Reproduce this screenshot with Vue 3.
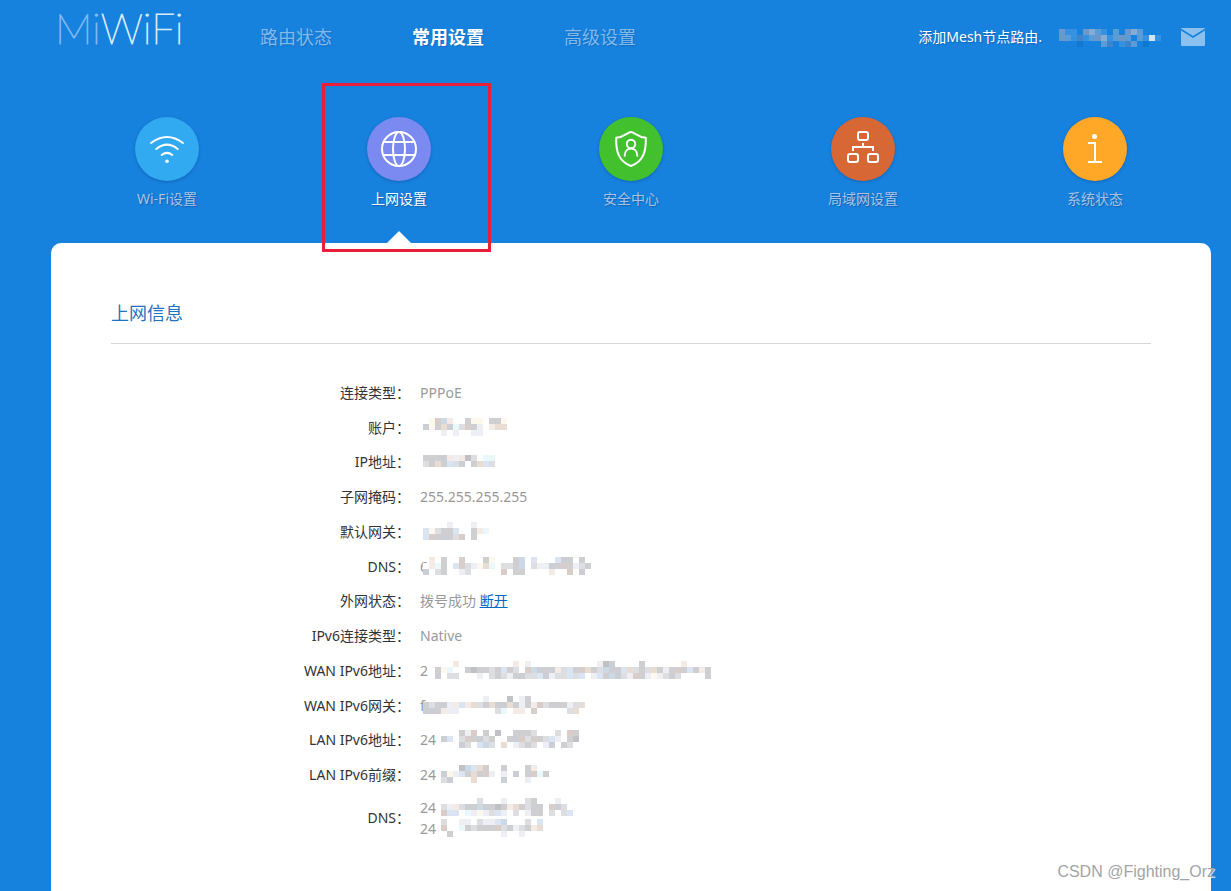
<script setup>
const tabs = [
  { label: '路由状态', active: false },
  { label: '常用设置', active: true },
  { label: '高级设置', active: false },
]

const sections = [
  { id: 'wifi', label: 'Wi-Fi设置' },
  { id: 'net', label: '上网设置', active: true },
  { id: 'safe', label: '安全中心' },
  { id: 'lan', label: '局域网设置' },
  { id: 'info', label: '系统状态' },
]

const palette = {
  W: '#ffffff', a: '#fdf8ee', r: '#f4ebe7', p: '#d8cdc9', q: '#e9ddd3',
  g: '#cfcfd1', d: '#c0c1c5', l: '#dddee1', b: '#dbe4f2', B: '#cbd8e6',
  c: '#e9f8fa', s: '#cbced5', v: '#eeeff4',
  1: '#3592e0', 2: '#5a9cd6', 3: '#6d97c9', 4: '#3f84c8', 5: '#86abd4', 6: '#cfe4f8', 7: '#0f78d2',
}

// Masked values are drawn as 6px cells, one letter of the palette per cell.
function cells(rows) {
  return rows.flatMap((row, y) =>
    [...row].map((k, x) => ({ x: x * 6, y: y * 6, fill: palette[k] })).filter((c) => c.fill),
  )
}

const userMask = cells(['311.3521.2.352...', '321412351232.2161', '...7...24.142.7..'])

const rows = [
  { label: '连接类型：', lines: [{ text: 'PPPoE' }] },
  { label: '账户：', lines: [{ mask: cells(['.apBr..gaa.gga', 'sagqsclpgv.rqq', '...v.v..vv....']) }] },
  { label: 'IP地址：', lines: [{ mask: cells(['gggsrvrdl.cc', 'lgqgblsWgqbl']), low: true }] },
  { label: '子网掩码：', lines: [{ text: '255.255.255.255' }] },
  { label: '默认网关：', lines: [{ mask: cells(['....v...v..', 'balggb..grc', 'bpgsglp.g..']) }] },
  {
    label: 'DNS：',
    lines: [{ text: '6', mask: cells(['.r.g..p...ga...gB.b...bsg.g.', 'Wrcg.bplvaqc.llgB.lvvsgpgvlg', 's.lg..vl.....p.gg....r..p.s.']) }],
  },
  { label: '外网状态：', lines: [{ text: '拨号成功', link: '断开' }] },
  { label: 'IPv6连接类型：', lines: [{ text: 'Native' }] },
  {
    label: 'WAN IPv6地址：',
    lines: [{
      text: '2',
      mask: cells([
        '.....r.........r.v...........vds....g......r....',
        '..gac..sdgglgbglWpBsgsrlbgpqglBsgbqlglqgvgpgbgrg',
        '..s.ll...v.lglvgsllbsvllblb.vbgBslvpgvavlgl....g',
      ]),
    }],
  },
  {
    label: 'WAN IPv6网关：',
    lines: [{ text: 'f', mask: cells(['..........v...d.vg.........', 'glgsvrbrqlsqgsqgvgrplgggvlq', 'ssgrvv......lc.rr.p.....lq.']) }],
  },
  {
    label: 'LAN IPv6地址：',
    lines: [{ text: '24', mask: cells(['......gvp.g.d..gggl...l.pg', '...sb.lpgslg..gsplpglbv.gd', '......sl.bBl.q.vlgl.vs.gl.']) }],
  },
  {
    label: 'LAN IPv6前缀：',
    lines: [{ text: '24', mask: cells(['......dBbqg..g...gr..', '...savbgqgpv.v.s.gpcg', '...ls...q....s...v...']) }],
  },
  {
    label: 'DNS：',
    tall: true,
    lines: [
      { text: '24', mask: cells(['.........l...v...lg...v..', '...lvrlsgBsgdgrqglgs.psl.', '...pbb.cvavlbv.l.vgg.l.lb']) },
      { text: '24', mask: cells(['...l..vv.lvvbB...l.b.', '...p..cglgggplsvlgrq.', '....g........v..v....']) },
    ],
  },
]
</script>

<template>
  <div class="page">
    <header class="top">
      <a class="logo" href="#"><span class="soft">Mi</span>WiFi</a>
      <nav class="tabs">
        <a v-for="t in tabs" :key="t.label" href="#" class="tab" :class="{ active: t.active }">{{ t.label }}</a>
      </nav>
      <div class="account">
        <a class="mesh" href="#">添加Mesh节点路由.</a>
        <svg class="user" width="102" height="18" viewBox="0 0 102 18" shape-rendering="crispEdges" aria-hidden="true">
          <rect v-for="(c, i) in userMask" :key="i" :x="c.x" :y="c.y" width="6" height="6" :fill="c.fill" />
        </svg>
        <button class="mail" type="button" aria-label="消息">
          <svg width="24" height="18" viewBox="0 0 24 18">
            <rect width="24" height="18" rx="1" fill="#8cc0ef" />
            <path d="M0 1.5L12 9L24 1.5" fill="none" stroke="#1781de" stroke-width="1.6" />
          </svg>
        </button>
      </div>
    </header>

    <nav class="sections">
      <a v-for="s in sections" :key="s.id" href="#" class="section" :class="{ active: s.active }">
        <span class="disc" :class="s.id">
          <svg width="64" height="64" viewBox="0 0 64 64" fill="none" stroke="#fff" stroke-width="2">
            <g v-if="s.id === 'wifi'" stroke-linecap="round">
              <path d="M16 26Q32 14 48 26M21.300 32Q32 23.200 42.700 32M26.700 38Q32 33.800 37.300 38" />
              <circle cx="32" cy="44.300" r="1.800" fill="#fff" stroke="none" />
            </g>
            <g v-else-if="s.id === 'net'">
              <circle cx="32" cy="32" r="17" />
              <ellipse cx="32" cy="32" rx="6" ry="17" />
              <path d="M16.500 25H47.500M16.500 38H47.500" />
            </g>
            <g v-else-if="s.id === 'safe'" stroke-linejoin="round">
              <path d="M32 15C28.500 15 26 20 17.200 20.700C16.800 34 19.500 44.500 32 49C44.500 44.500 47.200 34 46.800 20.700C38 20 35.500 15 32 15Z" />
              <circle cx="32" cy="27" r="4.200" />
              <path d="M25.700 38.700C25.700 29.200 38.300 29.200 38.300 38.700" stroke-linecap="round" />
            </g>
            <g v-else-if="s.id === 'lan'">
              <rect x="27" y="15" width="10" height="8" rx="2" />
              <rect x="17" y="37" width="10" height="8" rx="2" />
              <rect x="37" y="37" width="10" height="8" rx="2" />
              <path d="M32 26V30M22 34V30H42V34" />
            </g>
            <g v-else>
              <circle cx="31.500" cy="19.500" r="2.500" fill="#fff" stroke="none" />
              <path d="M25 26H32V45M25 45H39" />
            </g>
          </svg>
        </span>
        <span class="name">{{ s.label }}</span>
        <span v-if="s.active" class="arrow"></span>
        <span v-if="s.active" class="marker"></span>
      </a>
    </nav>

    <main class="panel">
      <h2 class="title">上网信息</h2>
      <table class="details">
        <tbody>
          <tr v-for="(r, i) in rows" :key="i" :class="{ tall: r.tall }">
            <th scope="row">{{ r.label }}</th>
            <td>
              <div v-for="(l, j) in r.lines" :key="j" class="line">
                {{ l.text }}
                <a v-if="l.link" href="#" class="link">{{ l.link }}</a>
                <svg v-if="l.mask" class="mask" :class="{ low: l.low }" width="300" height="18" viewBox="0 0 300 18" shape-rendering="crispEdges" aria-hidden="true">
                  <rect v-for="(c, k) in l.mask" :key="k" :x="c.x" :y="c.y" width="6" height="6" :fill="c.fill" />
                </svg>
              </div>
            </td>
          </tr>
        </tbody>
      </table>
    </main>
    <div class="watermark">CSDN @Fighting_Orz</div>
  </div>
</template>

<style>
body {
  background: #1781de;
}
</style>

<style scoped>
.page {
  position: relative;
  box-sizing: border-box;
  min-height: 100vh;
  padding: 0 20px 0 51px;
  display: flex;
  flex-direction: column;
  overflow: hidden;
  background: #1781de;
  font-family: "Noto Sans", "Noto Sans CJK SC", sans-serif;
  font-size: 14px;
}
a {
  text-decoration: none;
}
.top {
  display: flex;
  height: 73px;
}
.logo {
  width: 209px;
  box-sizing: border-box;
  padding-left: 4px;
  font-family: Lato, sans-serif;
  font-weight: 100;
  font-size: 42px;
  line-height: 56px;
  color: #e6f2fd;
  -webkit-text-stroke: 1px #d6eafb;
}
.soft {
  color: #8cc3f3;
  -webkit-text-stroke: 1px #7ebaf0;
}
.tabs {
  display: flex;
  gap: 80px;
}
.tab {
  font-size: 18px;
  line-height: 74px;
  color: #82b9ec;
  text-shadow: 1px 1px 1px rgba(0, 40, 90, 0.2);
}
.tab.active {
  color: #fff;
  font-weight: 700;
}
.account {
  display: flex;
  align-items: center;
  margin-left: auto;
  padding-right: 6px;
}
.mesh {
  padding-bottom: 2px;
  color: #fff;
  text-shadow: 1px 1px 1px rgba(0, 40, 90, 0.3);
}
.user {
  margin: 3px 20px 0 17px;
}
.mail {
  display: flex;
  padding: 0;
  border: 0;
  background: none;
}
.sections {
  display: grid;
  grid-template-columns: repeat(5, 1fr);
  height: 170px;
}
.section {
  position: relative;
  display: flex;
  flex-direction: column;
  align-items: center;
  padding-top: 44px;
  color: #a8c3e6;
  text-shadow: 1px 1px 1px rgba(0, 40, 90, 0.35);
}
.section.active {
  color: #fff;
}
.disc {
  width: 64px;
  height: 64px;
  border-radius: 50%;
  box-shadow: 0 1px 3px rgba(0, 40, 90, 0.3);
}
.disc svg {
  display: block;
}
.wifi { background: #31aaf1; }
.net { background: #7b8af1; }
.safe { background: #42c02e; }
.lan { background: #d76735; }
.info { background: #ffa726; }
.name {
  margin-top: 8px;
  line-height: 20px;
}
.arrow {
  position: absolute;
  bottom: 0;
  border: 12px solid transparent;
  border-top: 0;
  border-bottom-color: #fff;
}
.marker {
  position: absolute;
  z-index: 1;
  left: 39px;
  top: 10px;
  width: 163px;
  height: 163px;
  border: 3px solid #e81f38;
}
.panel {
  flex: 1;
  padding: 50px 60px 47px;
  border-radius: 10px 10px 0 0;
  background: #fff;
}
.title {
  margin: 0;
  padding-bottom: 10px;
  border-bottom: 1px solid #d6d6d6;
  font-size: 18px;
  font-weight: 400;
  line-height: 40px;
  color: #1f73bf;
}
.details {
  width: 100%;
  height: 468px;
  margin-top: 31px;
  border-collapse: collapse;
}
th,
td {
  padding: 0;
  font-weight: 400;
  line-height: 21px;
  vertical-align: middle;
}
th {
  width: 299px;
  text-align: right;
  color: #333;
}
td {
  padding-left: 10px;
  color: #999;
}
.tall {
  height: 51px;
}
.line {
  position: relative;
  height: 21px;
  white-space: nowrap;
}
.mask {
  position: absolute;
  left: 3px;
  top: 1px;
}
.mask.low {
  top: 4px;
}
.link {
  color: #0068c4;
  text-decoration: underline;
}
.watermark {
  position: absolute;
  right: 16px;
  bottom: 8px;
  font-family: "Liberation Sans", sans-serif;
  font-size: 16px;
  line-height: 22px;
  color: #a2a4a6;
  text-shadow: 1px 1px 0 rgba(255, 255, 255, 0.7);
}
</style>
